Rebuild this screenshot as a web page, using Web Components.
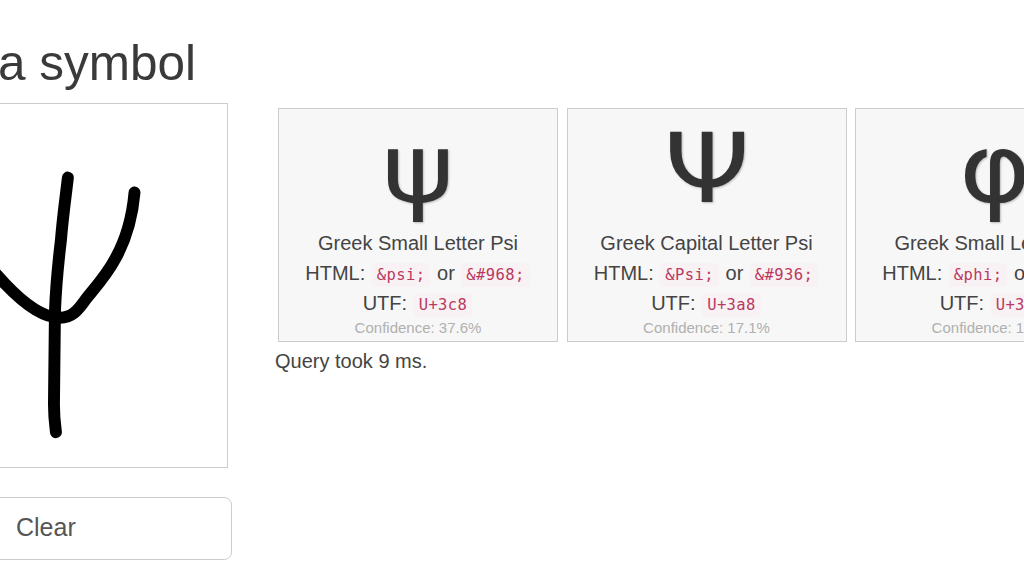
<!DOCTYPE html>
<html>
<head>
<meta charset="utf-8">
<title>Symbol search</title>
<style>
  html, body { margin: 0; height: 100%; overflow: hidden; background: #fff; }
  body { font-family: "Liberation Sans", Arial, sans-serif; color: #333; }
</style>
</head>
<body>
<symbol-app></symbol-app>

<script>
// drawing pad: the sketch the user made, plus the clear button
class DrawPad extends HTMLElement {
  constructor() {
    super();
    let shadowRoot = this.attachShadow({mode: 'open'});
    shadowRoot.innerHTML = `
      <style>
        :host { display: block; width: 369px; flex: none; }
        h1 { margin: 0 0 14px; font-size: 49.5px; font-weight: 400; line-height: 52px; color: #3a3a3a; white-space: nowrap; text-align: right; padding-right: 36px; }
        .pad { display: block; width: 365px; height: 365px; box-sizing: border-box; border: 1px solid #ccc; background: #fff; }
        button { display: block; box-sizing: border-box; width: 369px; height: 63px; margin-top: 29px; padding: 0 0 2px 152px; text-align: left;
          font: 25px "Liberation Sans", Arial, sans-serif; color: #555; background: #fff; border: 1px solid #ccc; border-radius: 8px; }
      </style>
      <h1>Draw a symbol</h1>
      <svg class="pad" viewBox="-137 103 365 365">
        <path d="M68 177 C66 195 63 215 61 240 C58 265 56 285 55 312 L54 405 C54 418 55 425 56 433"
              fill="none" stroke="#000" stroke-width="12" stroke-linecap="round" stroke-linejoin="round"/>
        <path d="M135 192 C133 215 127 238 116 258 C107 275 96 287 87 298 C78 311 72 318 60 318 C44 318 24 304 5 284 L-6 272"
              fill="none" stroke="#000" stroke-width="12" stroke-linecap="round" stroke-linejoin="round"/>
      </svg>
      <button type="button"><slot></slot></button>
    `;
  }
}
customElements.define('draw-pad', DrawPad);

// one result card, all values come from attributes
class SymbolCard extends HTMLElement {
  constructor() {
    super();
    let shadowRoot = this.attachShadow({mode: 'open'});
    shadowRoot.innerHTML = `
      <style>
        :host { display: block; width: 280px; height: 234px; flex: none; box-sizing: border-box; border: 1px solid #ccc; background: #f7f7f7; text-align: center; color: #444; overflow: hidden; }
        .glyph { height: 115px; font: 96px/121px "DejaVu Sans", sans-serif; color: #333; text-shadow: 1px 1px 2px rgba(0,0,0,.25); transform: scaleX(1.14); }
        .name { font-size: 20px; line-height: 30px; margin: 4px 0 0; white-space: nowrap; }
        .row { font-size: 20px; line-height: 30px; white-space: nowrap; }
        code { font: 15.5px "DejaVu Sans Mono", monospace; letter-spacing: .4px; color: #b93a60; background: #f9f2f4; border-radius: 4px; padding: 3px 5px; margin: 0 1px; }
        .conf { font-size: 15px; line-height: 20px; margin-top: 0; color: #b0b0b0; white-space: nowrap; }
      </style>
      <div class="glyph"></div>
      <div class="name"></div>
      <div class="row">HTML: <code class="ent"></code> or <code class="num"></code></div>
      <div class="row">UTF: <code class="utf"></code></div>
      <div class="conf"></div>
    `;
    this.$root = shadowRoot;
  }

  connectedCallback() {
    this.$root.querySelector('.glyph').textContent = this.getAttribute('data-glyph');
    this.$root.querySelector('.name').textContent = this.getAttribute('data-name');
    this.$root.querySelector('.ent').textContent = this.getAttribute('data-ent');
    this.$root.querySelector('.num').textContent = this.getAttribute('data-num');
    this.$root.querySelector('.utf').textContent = this.getAttribute('data-utf');
    this.$root.querySelector('.conf').textContent = 'Confidence: ' + this.getAttribute('data-conf');
  }
}
customElements.define('symbol-card', SymbolCard);

// right hand side: row of cards and the timing line
class ResultList extends HTMLElement {
  constructor() {
    super();
    let shadowRoot = this.attachShadow({mode: 'open'});
    shadowRoot.innerHTML = `
      <style>
        :host { display: block; padding: 71px 0 0 43px; }
        .cards { display: flex; gap: 8.5px; margin-left: 3px; }
        .took { margin-top: 7px; font-size: 20px; line-height: 24px; color: #444; white-space: nowrap; }
      </style>
      <div class="cards"><slot></slot></div>
      <div class="took">Query took 9 ms.</div>
    `;
  }
}
customElements.define('result-list', ResultList);

// page layout, left column starts off screen as in the screenshot
class SymbolApp extends HTMLElement {
  constructor() {
    super();
    let shadowRoot = this.attachShadow({mode: 'open'});
    shadowRoot.innerHTML = `
      <style>
        :host { display: flex; width: 1300px; margin-left: -137px; padding-top: 37px; box-sizing: border-box; }
      </style>
      <draw-pad>Clear</draw-pad>
      <result-list>
        <symbol-card data-glyph="&#968;" data-name="Greek Small Letter Psi" data-ent="&amp;psi;" data-num="&amp;#968;" data-utf="U+3c8" data-conf="37.6%"></symbol-card>
        <symbol-card data-glyph="&#936;" data-name="Greek Capital Letter Psi" data-ent="&amp;Psi;" data-num="&amp;#936;" data-utf="U+3a8" data-conf="17.1%"></symbol-card>
        <symbol-card data-glyph="&#966;" data-name="Greek Small Letter Phi" data-ent="&amp;phi;" data-num="&amp;#966;" data-utf="U+3c6" data-conf="12.4%"></symbol-card>
      </result-list>
    `;
  }
}
customElements.define('symbol-app', SymbolApp);
</script>
</body>
</html>
